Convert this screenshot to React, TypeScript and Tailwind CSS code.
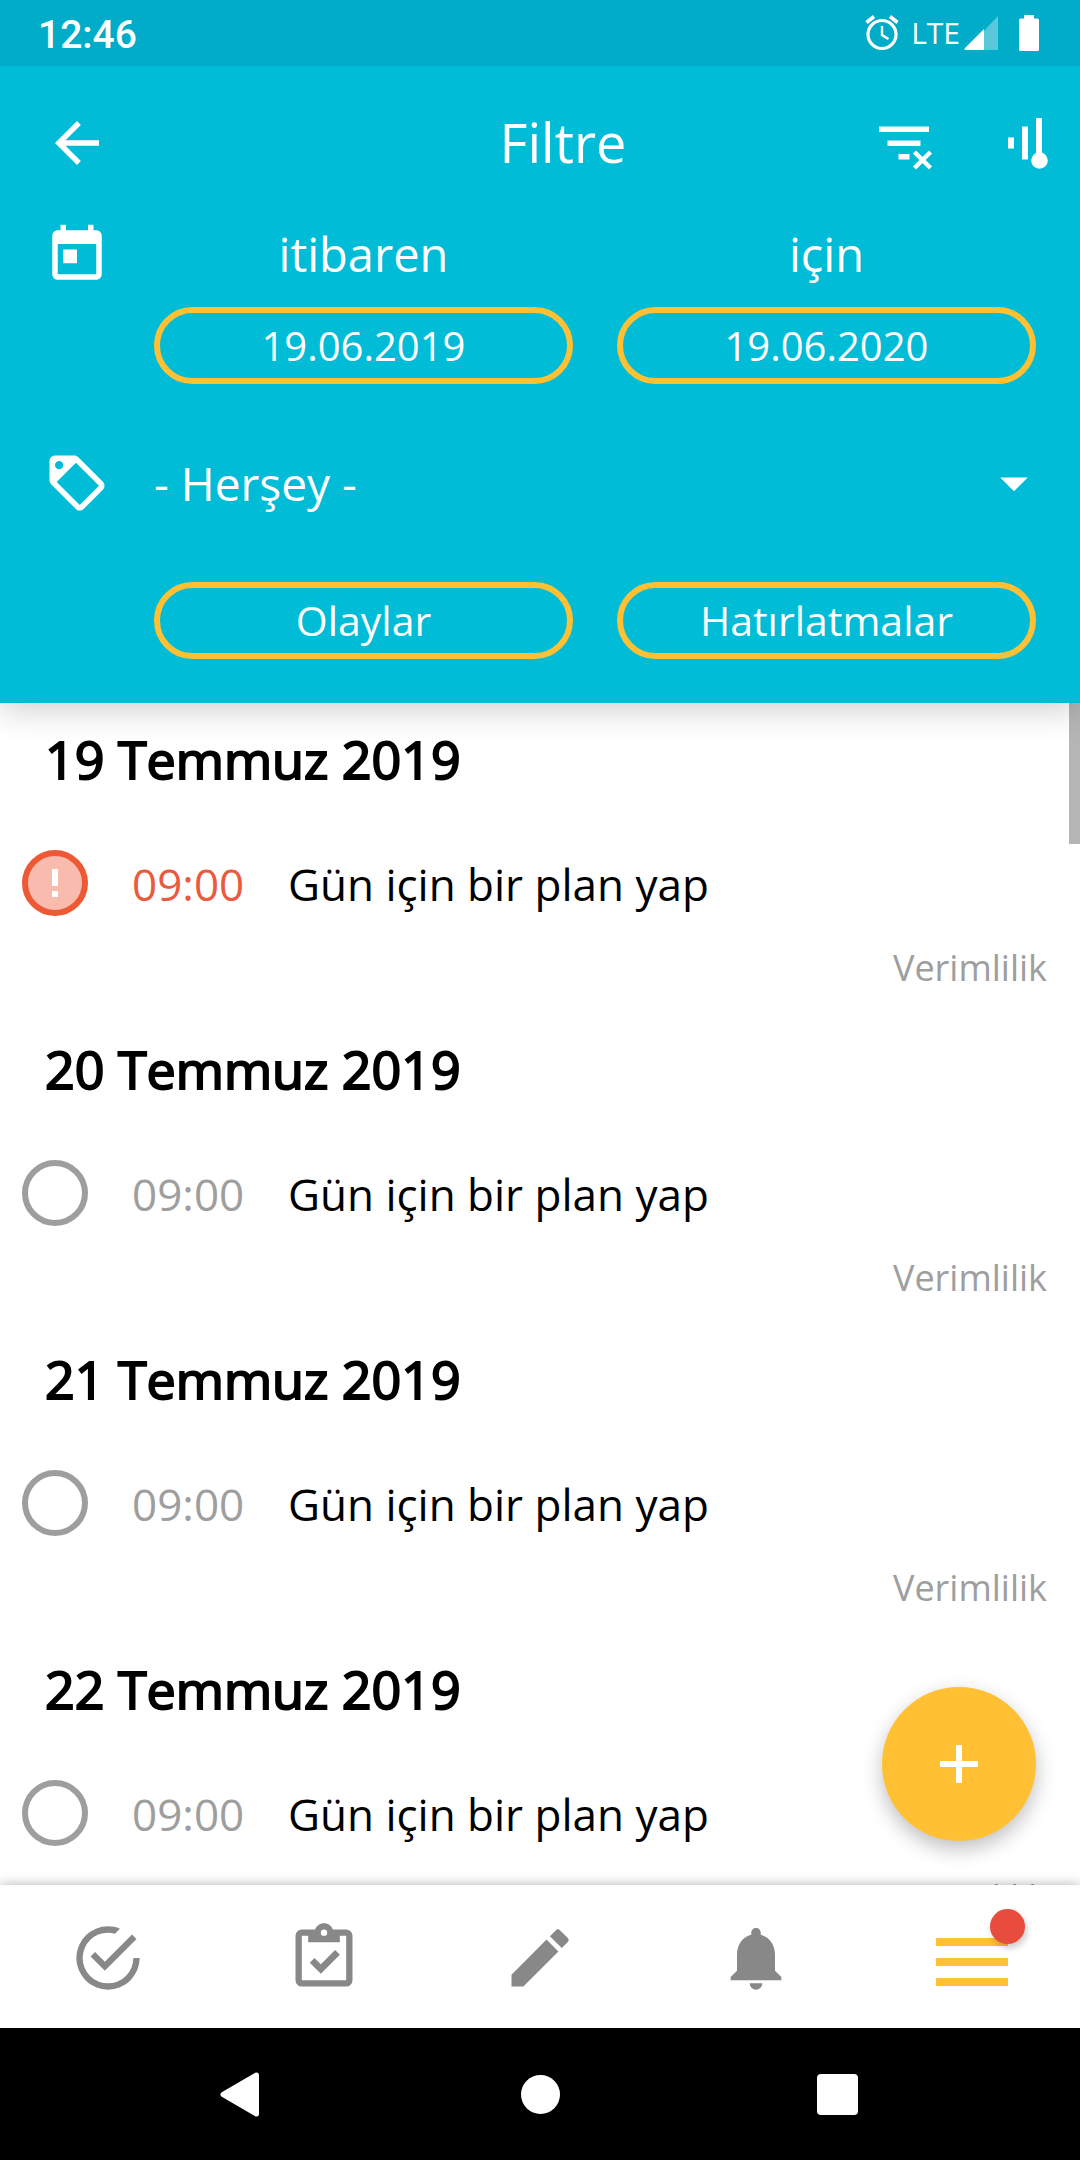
import { useState } from "react";
import {
  MdArrowBack,
  MdArrowDropDown,
  MdEdit,
  MdNotifications,
  MdToday,
} from "react-icons/md";

type Task = {
  id: number;
  date: string;
  time: string;
  title: string;
  category: string;
  overdue?: boolean;
};

const TASKS: Task[] = [
  {
    id: 1,
    date: "19 Temmuz 2019",
    time: "09:00",
    title: "Gün için bir plan yap",
    category: "Verimlilik",
    overdue: true,
  },
  {
    id: 2,
    date: "20 Temmuz 2019",
    time: "09:00",
    title: "Gün için bir plan yap",
    category: "Verimlilik",
  },
  {
    id: 3,
    date: "21 Temmuz 2019",
    time: "09:00",
    title: "Gün için bir plan yap",
    category: "Verimlilik",
  },
  {
    id: 4,
    date: "22 Temmuz 2019",
    time: "09:00",
    title: "Gün için bir plan yap",
    category: "Verimlilik",
  },
];

const pill =
  "h-[77px] w-full rounded-full border-6 border-[#ffc033] text-center leading-none text-white";

function StatusBar() {
  return (
    <div className="flex h-[66px] items-center justify-between bg-[#00acc7] pl-[38px] pr-[41px] text-white">
      <span className="pt-1 font-[Roboto,sans-serif] text-[39px] font-medium leading-none">
        12:46
      </span>
      <div className="flex items-center">
        {/* alarm */}
        <svg viewBox="0 0 34 36" className="h-9 w-[34px]" fill="none" stroke="currentColor">
          <circle cx="17" cy="19.5" r="14" strokeWidth="3.2" />
          <path d="M17 11v9l6.5 4" strokeWidth="2.4" />
          <path d="M1.5 7.5 9 1.5M25 1.5l7.5 6" strokeWidth="3.6" />
        </svg>
        <span className="ml-3 text-[30px] leading-none">LTE</span>
        {/* signal */}
        <svg viewBox="0 0 34 34" className="ml-1 h-[34px] w-[34px]" fill="currentColor">
          <path d="M34 0v34H2L34 0z" opacity=".35" />
          <path d="M20 13v21H1.5q-2-.5-.5-2L20 13z" />
        </svg>
        {/* battery */}
        <svg viewBox="0 0 20 36" className="ml-[21px] h-9 w-5" fill="currentColor">
          <path d="M5 0h10v3.5h3.5A1.5 1.5 0 0 1 20 5v29.5a1.5 1.5 0 0 1-1.5 1.5h-17A1.5 1.5 0 0 1 0 34.5V5a1.5 1.5 0 0 1 1.5-1.5H5z" />
        </svg>
      </div>
    </div>
  );
}

function Toolbar() {
  return (
    <div className="flex items-center px-[22px] pb-[46px] pt-11">
      <button type="button" aria-label="Geri" className="ml-[22px]">
        <MdArrowBack className="size-[66px]" />
      </button>
      <h1 className="h-[66px] flex-1 pl-[145px] text-center text-[54px] leading-[64px]">
        Filtre
      </h1>
      <button type="button" aria-label="Filtreyi temizle" className="mr-[55px]">
        <svg viewBox="0 0 66 66" className="size-[66px]" fill="currentColor">
          <path d="M8 16.5h50V22H8zM16.5 30.5h33V36h-33zM27.5 44h11v5.5h-11z" />
          <path d="m43.5 42 16 16M59.5 42l-16 16" stroke="currentColor" strokeWidth="4.5" />
        </svg>
      </button>
      <button type="button" aria-label="Sırala">
        <svg viewBox="0 0 66 66" className="size-[66px]" fill="currentColor">
          <path d="M16 27.500h6v11h-6zM30 16.500h6v33h-6zM44 8h6v43h-6z" />
          <circle cx="47.5" cy="50.5" r="8.3" />
        </svg>
      </button>
    </div>
  );
}

function Filters() {
  const [category, setCategory] = useState("all");

  return (
    <div className="px-11 pb-11">
      <div className="flex gap-11">
        <MdToday className="size-[66px] shrink-0" />
        <div className="grid flex-1 grid-cols-2 gap-x-11 gap-y-[19px]">
          <label htmlFor="from" className="h-[66px] text-center text-[47px] leading-[64px]">
            itibaren
          </label>
          <label htmlFor="to" className="h-[66px] text-center text-[47px] leading-[64px]">
            için
          </label>
          <button id="from" type="button" className={`${pill} text-[40px]`}>
            19.06.2019
          </button>
          <button id="to" type="button" className={`${pill} text-[40px]`}>
            19.06.2020
          </button>
        </div>
      </div>

      <div className="mt-[66px] flex gap-11">
        {/* tag */}
        <svg viewBox="0 0 24 24" className="size-[66px] shrink-0" fill="currentColor">
          <path
            fillRule="evenodd"
            d="M21.41 11.58l-9-9C12.04 2.21 11.53 2 11 2H4a2 2 0 0 0-2 2v7c0 .53.21 1.04.59 1.41l9 9c.36.37.86.59 1.41.59s1.05-.22 1.41-.59l7-7c.37-.36.59-.86.59-1.41s-.23-1.06-.59-1.42zM13 20.01 4.62 11.62 11.62 4.62 20 13l-7 7.01zM5.5 4a1.5 1.5 0 1 0 0 3 1.5 1.5 0 0 0 0-3z"
          />
        </svg>
        <div className="relative flex-1">
          <select
            aria-label="Kategori"
            value={category}
            onChange={(e) => setCategory(e.target.value)}
            className="h-[66px] w-full appearance-none bg-transparent text-[46px] leading-[66px]"
          >
            <option value="all">- Herşey -</option>
            <option value="productivity">Verimlilik</option>
          </select>
          <MdArrowDropDown className="pointer-events-none absolute -right-[11px] top-0 size-[66px]" />
        </div>
      </div>

      <div className="ml-[110px] mt-[66px] grid grid-cols-2 gap-11">
        <button type="button" className={`${pill} text-[41px]`}>
          Olaylar
        </button>
        <button type="button" className={`${pill} text-[41px]`}>
          Hatırlatmalar
        </button>
      </div>
    </div>
  );
}

function TaskItem({ task }: { task: Task }) {
  return (
    <li className="pb-[21px] pt-[19px]">
      <h2 className="px-[45px] text-[52px] leading-[74px] [-webkit-text-stroke:2px_black]">
        {task.date}
      </h2>

      <div className="mt-[54px] flex items-center gap-11 pl-[22px]">
        <div className="grid size-[66px] place-items-center">
          <input
            id={`task-${task.id}`}
            type="checkbox"
            className={
              task.overdue
                ? "col-start-1 row-start-1 size-[66px] appearance-none rounded-full border-6 border-[#ee5935] bg-[#f9bbae]"
                : "col-start-1 row-start-1 size-[66px] appearance-none rounded-full border-6 border-[#9e9e9e]"
            }
          />
          {task.overdue && (
            <svg
              viewBox="0 0 6 28"
              className="pointer-events-none col-start-1 row-start-1 h-7 w-1.5"
              fill="white"
            >
              <path d="M0 0h6v17H0zM0 22h6v6H0z" />
            </svg>
          )}
        </div>
        <time
          className={
            task.overdue
              ? "w-28 pt-0.5 text-[44px] leading-[60px] text-[#ea5a3d]"
              : "w-28 pt-0.5 text-[44px] leading-[60px] text-[#9e9e9e]"
          }
        >
          {task.time}
        </time>
        <label
          htmlFor={`task-${task.id}`}
          className="pt-0.5 text-[44px] leading-[60px]"
        >
          {task.title}
        </label>
      </div>

      <p className="mt-[27px] pr-[33px] text-right text-[36px] leading-[49px] text-[#9e9e9e]">
        {task.category}
      </p>
    </li>
  );
}

function BottomNav() {
  return (
    <nav className="relative z-10 grid h-[143px] grid-cols-5 bg-white pt-0.5 text-[#888888] shadow-[0_0_12px_rgba(0,0,0,0.3)]">
      <button type="button" aria-label="Görevler" className="grid place-items-center">
        <svg viewBox="0 0 24 24" className="size-[76px]" fill="currentColor">
          <path d="M20 12a8 8 0 1 1-8-8c.76 0 1.5.11 2.2.31l1.57-1.57C14.61 2.26 13.34 2 12 2a10 10 0 1 0 10 10M7.91 10.08 6.5 11.5 11 16 21 6l-1.41-1.42L11 13.17z" />
        </svg>
      </button>
      <button type="button" aria-label="Planlar" className="grid place-items-center">
        <svg viewBox="0 0 24 24" className="size-[76px]" fill="currentColor">
          <path d="M19,3H14.82C14.4,1.84 13.3,1 12,1C10.7,1 9.6,1.84 9.18,3H5A2,2 0 0,0 3,5V19A2,2 0 0,0 5,21H19A2,2 0 0,0 21,19V5A2,2 0 0,0 19,3M12,3A1,1 0 0,1 13,4A1,1 0 0,1 12,5A1,1 0 0,1 11,4A1,1 0 0,1 12,3M7,7H17V5H19V19H5V5H7V7M7.5,13.5L9,12L11,14L15.5,9.5L17,11L11,17L7.5,13.5Z" />
        </svg>
      </button>
      <button type="button" aria-label="Notlar" className="grid place-items-center">
        <MdEdit className="size-[76px]" />
      </button>
      <button type="button" aria-label="Hatırlatmalar" className="grid place-items-center">
        <MdNotifications className="size-[76px]" />
      </button>
      <button type="button" aria-label="Menü" className="grid place-items-center">
        <span className="relative flex w-18 flex-col gap-3 pt-2">
          <span className="h-2 bg-[#ffc033]" />
          <span className="h-2 bg-[#ffc033]" />
          <span className="h-2 bg-[#ffc033]" />
          <span className="absolute -right-[17px] -top-[21px] size-[35px] rounded-full bg-[#e84c3d] shadow-[2px_4px_6px_rgba(0,0,0,0.2)]" />
        </span>
      </button>
    </nav>
  );
}

function SystemNav() {
  return (
    <div className="relative z-10 flex h-33 items-center justify-center gap-[231px] bg-black text-white">
      <button type="button" aria-label="Sistem geri">
        <svg viewBox="0 0 66 66" className="size-[66px]" fill="currentColor" stroke="currentColor">
          <path d="M13 33.5 46.5 14v39z" strokeWidth="5" strokeLinejoin="round" />
        </svg>
      </button>
      <button type="button" aria-label="Ana ekran">
        <svg viewBox="0 0 66 66" className="size-[66px]" fill="currentColor">
          <circle cx="33.5" cy="33.5" r="19.5" />
        </svg>
      </button>
      <button type="button" aria-label="Son uygulamalar">
        <svg viewBox="0 0 66 66" className="size-[66px]" fill="currentColor">
          <rect x="13" y="13" width="41" height="41" rx="4" />
        </svg>
      </button>
    </div>
  );
}

export default function App() {
  return (
    <div className="flex h-screen flex-col overflow-hidden bg-white font-['Open_Sans','Noto_Sans',sans-serif] text-black">
      <header className="relative z-10 bg-[#00bcd7] text-white shadow-[0_6px_32px_rgba(0,0,0,0.2)]">
        <StatusBar />
        <Toolbar />
        <Filters />
      </header>

      <main className="relative min-h-0 flex-1 overflow-hidden">
        <ul>
          {TASKS.map((task) => (
            <TaskItem key={task.id} task={task} />
          ))}
        </ul>

        {/* scroll thumb */}
        <div className="absolute right-0 top-0 h-[141px] w-[11px] bg-[#b5b5b5]" />

        {/* add button */}
        <button
          type="button"
          aria-label="Ekle"
          className="absolute bottom-11 right-11 grid size-[154px] place-items-center rounded-full bg-[#ffc033] text-white shadow-[0_8px_20px_rgba(0,0,0,0.25)]"
        >
          <svg viewBox="0 0 38 38" className="size-[38px]" fill="currentColor">
            <path d="M16 0h6v16h16v6H22v16h-6V22H0v-6h16z" />
          </svg>
        </button>
      </main>

      <BottomNav />
      <SystemNav />
    </div>
  );
}
